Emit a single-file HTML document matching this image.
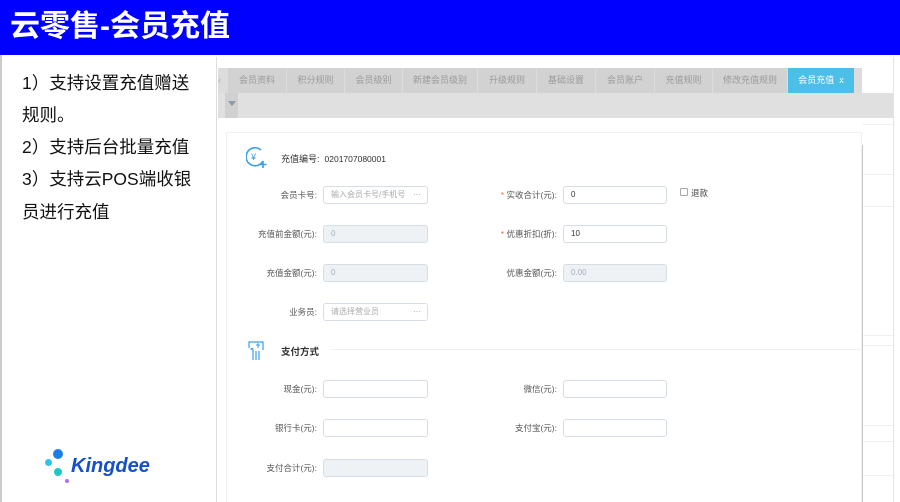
<!DOCTYPE html>
<html><head><meta charset="utf-8"><style>
*{margin:0;padding:0;box-sizing:border-box}
body{width:900px;height:502px;overflow:hidden;background:#fff;position:relative;font-family:"Liberation Sans","Noto Sans CJK SC",sans-serif}
.a{position:absolute}
.hdr{left:0;top:0;width:900px;height:55px;background:#0000ff}
.title{left:10px;top:6px;color:#fff;font-size:30px;font-weight:bold;white-space:nowrap;line-height:42px}
.lt{left:22px;font-size:17.5px;color:#111;white-space:nowrap}
.tab{top:68px;height:25px;background:#d2d2d2;color:#9a9a9a;font-size:9px;line-height:25px;text-align:center}
.lbl{font-size:8.5px;color:#555;text-align:right;white-space:nowrap}
.inp{height:18px;border:1px solid #d6dde5;border-radius:3px;background:#fff;font-size:8px;color:#333;line-height:16px;padding-left:7px}
.dis{background:#eef2f5;color:#aab}
.ph{color:#aaa}
.req{color:#f07030}
.hl{height:1px;background:#eef0f4}
</style></head><body>
<div class="a hdr"></div>
<div class="a title">云零售-会员充值</div>
<div class="a" style="left:0;top:55px;width:2px;height:447px;background:#ccc"></div>
<div class="a lt" style="top:70px">1）支持设置充值赠送</div>
<div class="a lt" style="top:102px">规则。</div>
<div class="a lt" style="top:134px">2）支持后台批量充值</div>
<div class="a lt" style="top:166px">3）支持云POS端收银</div>
<div class="a lt" style="top:199px">员进行充值</div>

<div class="a" style="left:53px;top:449px;width:10px;height:10px;border-radius:50%;background:#1a7fe8"></div>
<div class="a" style="left:45px;top:459px;width:7px;height:7px;border-radius:50%;background:#2ec4f0"></div>
<div class="a" style="left:54px;top:468px;width:8px;height:8px;border-radius:50%;background:#1ec8c0"></div>
<div class="a" style="left:65px;top:479px;width:4px;height:4px;border-radius:50%;background:#b070f0"></div>
<div class="a" style="left:71px;top:455px;font-size:20px;font-weight:bold;font-style:italic;color:#1450c8">Kingdee</div>

<div class="a" style="left:216px;top:57px;width:1px;height:445px;background:#ddd"></div>
<div class="a" style="left:893px;top:57px;width:1px;height:445px;background:#e4e4e4"></div>
<div class="a" style="left:218px;top:68px;width:644px;height:25px;background:#dcdcdc"></div>
<div class="a" style="left:218px;top:93px;width:675px;height:25px;background:#e0e0e0"></div>
<div class="a" style="left:225px;top:93px;width:13px;height:25px;background:#d0d0d0"></div>
<div class="a" style="left:228px;top:101px;width:0;height:0;border-left:4px solid transparent;border-right:4px solid transparent;border-top:5px solid #8a9aa8"></div>
<div class="a" style="left:218px;top:75px;font-size:9px;color:#aaa">‹</div>
<div class="a tab" style="left:228px;width:58px">会员资料</div>
<div class="a tab" style="left:287px;width:57px">积分规则</div>
<div class="a tab" style="left:345px;width:57px">会员级别</div>
<div class="a tab" style="left:403px;width:74px">新建会员级别</div>
<div class="a tab" style="left:478px;width:58px">升级规则</div>
<div class="a tab" style="left:537px;width:58px">基础设置</div>
<div class="a tab" style="left:596px;width:58px">会员账户</div>
<div class="a tab" style="left:655px;width:57px">充值规则</div>
<div class="a tab" style="left:713px;width:74px">修改充值规则</div>
<div class="a tab" style="left:788px;width:66px;background:#4bbfe8;color:#fff">会员充值 &nbsp;x</div>

<div class="a hl" style="left:862px;top:124px;width:31px"></div>
<div class="a hl" style="left:862px;top:174px;width:31px"></div>
<div class="a hl" style="left:862px;top:206px;width:31px"></div>
<div class="a hl" style="left:862px;top:335px;width:31px"></div>
<div class="a hl" style="left:862px;top:345px;width:31px"></div>
<div class="a hl" style="left:862px;top:425px;width:31px"></div>
<div class="a hl" style="left:862px;top:441px;width:31px"></div>
<div class="a hl" style="left:862px;top:475px;width:31px"></div>
<div class="a" style="left:862px;top:145px;width:1px;height:357px;background:#c8c8c8"></div>

<div class="a" style="left:226px;top:132px;width:636px;height:370px;border:1px solid #eef0f3;border-bottom:none;background:#fff"></div>
<svg class="a" style="left:246px;top:146px" width="22" height="24" viewBox="0 0 22 24"><path d="M15 4A9 9 0 1 0 17 15" fill="none" stroke="#3a9ee8" stroke-width="1.6"/><text x="5" y="14" font-size="9" fill="#3a9ee8" font-family="Liberation Sans">¥</text><path d="M17 15v7M13.5 18.5h7" stroke="#3a9ee8" stroke-width="1.6"/></svg>
<div class="a" style="left:281px;top:152px;font-size:9px;color:#333;white-space:nowrap">充值编号: &nbsp;<span style="font-size:8.5px">0201707080001</span></div>

<div class="a lbl" style="left:230px;width:87px;top:189px">会员卡号:</div>
<div class="a inp" style="left:323px;top:186px;width:105px"><span class="ph">输入会员卡号/手机号</span><span class="a" style="right:6px;top:0;color:#999">···</span></div>
<div class="a lbl" style="left:450px;width:107px;top:189px"><span class="req">* </span>实收合计(元):</div>
<div class="a inp" style="left:563px;top:186px;width:104px">0</div>
<div class="a" style="left:680px;top:188px;width:8px;height:8px;border:1px solid #aaa;border-radius:1px"></div>
<div class="a lbl" style="left:691px;top:187px;text-align:left;color:#444">退款</div>

<div class="a lbl" style="left:230px;width:87px;top:228px">充值前金额(元):</div>
<div class="a inp dis" style="left:323px;top:225px;width:105px">0</div>
<div class="a lbl" style="left:450px;width:107px;top:228px"><span class="req">* </span>优惠折扣(折):</div>
<div class="a inp" style="left:563px;top:225px;width:104px">10</div>

<div class="a lbl" style="left:230px;width:87px;top:267px">充值金额(元):</div>
<div class="a inp dis" style="left:323px;top:264px;width:105px">0</div>
<div class="a lbl" style="left:450px;width:107px;top:267px">优惠金额(元):</div>
<div class="a inp dis" style="left:563px;top:264px;width:104px">0.00</div>

<div class="a lbl" style="left:230px;width:87px;top:306px">业务员:</div>
<div class="a inp" style="left:323px;top:303px;width:105px"><span class="ph">请选择营业员</span><span class="a" style="right:6px;top:0;color:#999">···</span></div>

<div class="a hl" style="left:330px;top:349px;width:532px"></div>
<svg class="a" style="left:248px;top:340px" width="18" height="22" viewBox="0 0 18 22"><path d="M1 8V2h14v8M3 10c0-2 2-2 2 0v10M5 12v8M8 11v9M11 11v9" fill="none" stroke="#3a9ee8" stroke-width="1.2"/><path d="M10 3v5M8 5h4" stroke="#3a9ee8" stroke-width="1"/></svg>
<div class="a" style="left:281px;top:344px;font-size:9.5px;color:#333;font-weight:bold">支付方式</div>

<div class="a lbl" style="left:230px;width:87px;top:383px">现金(元):</div>
<div class="a inp" style="left:323px;top:380px;width:105px"></div>
<div class="a lbl" style="left:450px;width:107px;top:383px">微信(元):</div>
<div class="a inp" style="left:563px;top:380px;width:104px"></div>
<div class="a lbl" style="left:230px;width:87px;top:422px">银行卡(元):</div>
<div class="a inp" style="left:323px;top:419px;width:105px"></div>
<div class="a lbl" style="left:450px;width:107px;top:422px">支付宝(元):</div>
<div class="a inp" style="left:563px;top:419px;width:104px"></div>
<div class="a lbl" style="left:230px;width:87px;top:462px">支付合计(元):</div>
<div class="a inp dis" style="left:323px;top:459px;width:105px"></div>
</body></html>
